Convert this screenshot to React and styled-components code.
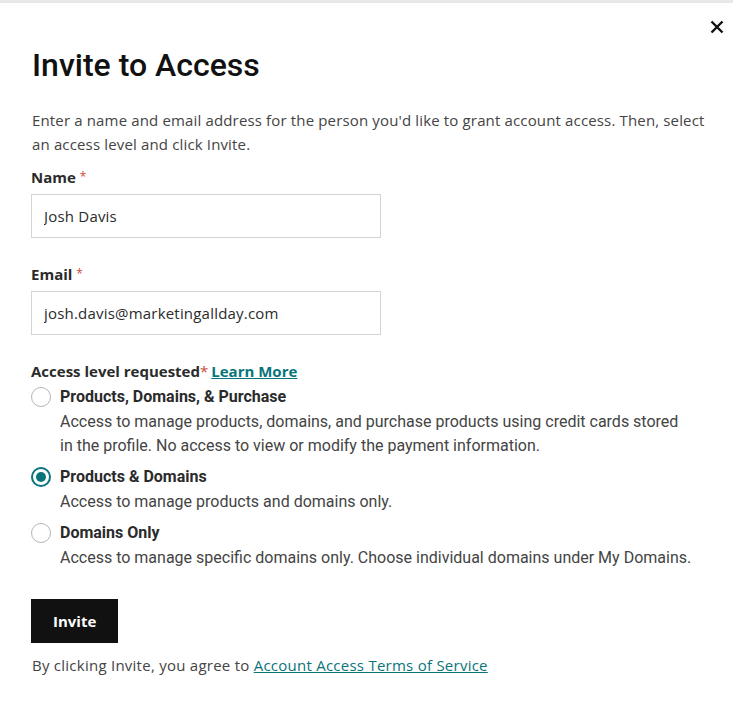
import styled, { createGlobalStyle } from "styled-components";

const GlobalStyle = createGlobalStyle`
  html, body {
    margin: 0;
    padding: 0;
    background: #fff;
  }
  body {
    font-family: "Open Sans", "Liberation Sans", sans-serif;
    color: #111;
  }
`;

const Modal = styled.div`
  position: relative;
  width: 733px;
  min-height: 711px;
  box-sizing: border-box;
  border-top: 3px solid #e8e8e8;
  padding: 42px 18px 20px 31px;
`;

const CloseButton = styled.button`
  position: absolute;
  top: 14px;
  right: 6px;
  width: 20px;
  height: 20px;
  padding: 0;
  border: none;
  background: none;
  cursor: pointer;
  display: flex;
  align-items: center;
  justify-content: center;
`;

const Title = styled.h2`
  margin: 0 0 23px 1px;
  font-family: "Roboto", sans-serif;
  font-size: 32px;
  font-weight: 500;
  line-height: 40px;
  color: #111;
`;

const Intro = styled.p`
  margin: 0 0 9px 1px;
  font-size: 15px;
  line-height: 24px;
  letter-spacing: 0.15px;
  color: #444;
`;

const Field = styled.div`
  display: flex;
  flex-direction: column;
  margin-bottom: ${(p) => p.$gap || 0}px;
`;

const Label = styled.label`
  font-size: 15px;
  font-weight: 700;
  line-height: 24px;
  color: #2b2b2b;
  margin-bottom: 5px;
`;

const Star = styled.span`
  color: #ce4a3a;
  font-weight: 400;
  font-size: 12px;
  vertical-align: top;
  margin-left: 4px;
`;

const Input = styled.input`
  width: 350px;
  height: 44px;
  box-sizing: border-box;
  padding: 0 12px;
  font-family: inherit;
  font-size: 15px;
  letter-spacing: 0.2px;
  color: #2b2b2b;
  border: 1px solid #d4d4d4;
  border-radius: 0;
  outline: none;
`;

const Group = styled.fieldset`
  border: none;
  margin: 0;
  padding: 0;
`;

const Legend = styled.div`
  font-size: 15px;
  font-weight: 700;
  line-height: 24px;
  color: #2b2b2b;
  margin-bottom: 2px;
`;

const LegendStar = styled.span`
  color: #ce4a3a;
  font-weight: 400;
  margin-right: 3px;
`;

const Link = styled.a`
  color: #09757a;
  text-decoration: underline;
  font-weight: ${(p) => (p.$bold ? 700 : 400)};
`;

const Option = styled.label`
  display: grid;
  grid-template-columns: 20px 1fr;
  column-gap: 9px;
  row-gap: 1px;
  cursor: pointer;
  margin-bottom: 7px;
`;

const Radio = styled.span`
  width: 20px;
  height: 20px;
  box-sizing: border-box;
  border-radius: 50%;
  border: ${(p) => (p.$checked ? "2px solid #09757a" : "1px solid #b5b5b5")};
  margin-top: 2px;
  display: flex;
  align-items: center;
  justify-content: center;

  &::after {
    content: "";
    display: ${(p) => (p.$checked ? "block" : "none")};
    width: 10px;
    height: 10px;
    border-radius: 50%;
    background: #09757a;
  }
`;

const OptionTitle = styled.span`
  font-family: "Roboto", sans-serif;
  font-size: 16px;
  font-weight: 700;
  line-height: 24px;
  color: #2b2b2b;
`;

const OptionText = styled.span`
  grid-column: 2;
  max-width: 632px;
  font-family: "Roboto", sans-serif;
  font-size: 16px;
  line-height: 24px;
  color: #444;
`;

const InviteButton = styled.button`
  margin-top: 22px;
  height: 44px;
  padding: 0 22px;
  background: #111;
  color: #fff;
  border: none;
  border-radius: 0;
  font-family: inherit;
  font-size: 15px;
  font-weight: 700;
  cursor: pointer;
`;

const Terms = styled.p`
  margin: 10px 0 0 1px;
  font-size: 15px;
  line-height: 24px;
  letter-spacing: 0.25px;
  color: #444;
`;

const options = [
  {
    title: "Products, Domains, & Purchase",
    text: "Access to manage products, domains, and purchase products using credit cards stored in the profile. No access to view or modify the payment information.",
  },
  {
    title: "Products & Domains",
    text: "Access to manage products and domains only.",
    checked: true,
  },
  {
    title: "Domains Only",
    text: "Access to manage specific domains only. Choose individual domains under My Domains.",
  },
];

export default function App() {
  return (
    <>
      <GlobalStyle />
      <Modal>
        <CloseButton aria-label="Close">
          <svg width="14" height="14" viewBox="0 0 14 14">
            <path d="M1.5 1.5L12.5 12.5M12.5 1.5L1.5 12.5" stroke="#111" strokeWidth="2.4" />
          </svg>
        </CloseButton>
        <Title>Invite to Access</Title>
        <Intro>
          Enter a name and email address for the person you'd like to grant account access. Then, select
          an access level and click Invite.
        </Intro>
        <Field $gap={24}>
          <Label>
            Name<Star>*</Star>
          </Label>
          <Input defaultValue="Josh Davis" />
        </Field>
        <Field $gap={24}>
          <Label>
            Email<Star>*</Star>
          </Label>
          <Input defaultValue="josh.davis@marketingallday.com" />
        </Field>
        <Group>
          <Legend>
            Access level requested<LegendStar>*</LegendStar>
            <Link href="#" $bold>
              Learn More
            </Link>
          </Legend>
          {options.map((o) => (
            <Option key={o.title}>
              <Radio $checked={o.checked} />
              <OptionTitle>{o.title}</OptionTitle>
              <OptionText>{o.text}</OptionText>
            </Option>
          ))}
        </Group>
        <InviteButton>Invite</InviteButton>
        <Terms>
          By clicking Invite, you agree to <Link href="#">Account Access Terms of Service</Link>
        </Terms>
      </Modal>
    </>
  );
}
